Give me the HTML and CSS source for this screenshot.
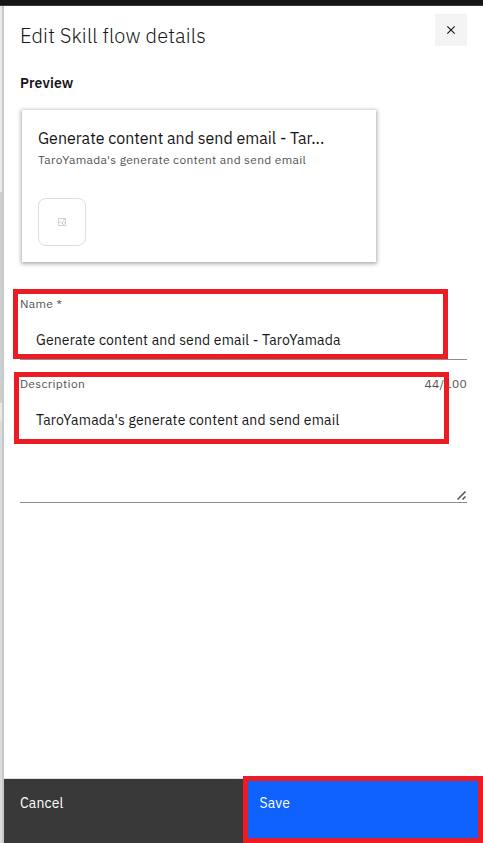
FILE: index.html
```html
<!DOCTYPE html>
<html lang="en">
<head>
<meta charset="utf-8">
<title>Edit Skill flow details</title>
<link rel="stylesheet" href="styles.css">
</head>
<body>
<div class="topbar"></div>
<div class="shell">
  <div class="backdrop"><i class="b1"></i><i class="b2"></i><i class="b3"></i><i class="b4"></i></div>
  <main class="panel">
    <header class="head">
      <h1><span>Edit Skill flow details</span></h1>
      <button class="close" aria-label="Close"><svg width="16" height="16" viewBox="0 0 16 16"><path d="M4.3 4.3l7.4 7.4M11.7 4.3l-7.4 7.4" stroke="#161616" stroke-width="1.1" fill="none"/></svg></button>
    </header>
    <h2><span>Preview</span></h2>
    <section class="card">
      <h3><span>Generate content and send email - Tar...</span></h3>
      <p><span>TaroYamada's generate content and send email</span></p>
      <div class="tile"><svg width="8" height="8" viewBox="0 0 8 8" fill="none" stroke="#c4c4c4" stroke-width=".8"><path d="M.5.5h7v7h-7zM.5 5.2l2-1.7 3.5 3.8M3.8 5l1.6-1.4 2 1.8M5 2.4l2.5-1.6"/></svg></div>
    </section>
    <div class="label"><span class="l-name">Name *</span></div>
    <div class="input"><span class="v-name">Generate content and send email - TaroYamada</span></div>
    <div class="label second"><span class="l-desc">Description</span><span class="count">44/100</span></div>
    <div class="area"><span class="v-desc">TaroYamada's generate content and send email</span>
      <svg class="grip" width="9" height="9" viewBox="0 0 9 9" stroke="#525252" stroke-width="1.5"><path d="M.5 8.5l8-8M5.5 8.5l3-3"/></svg>
    </div>
    <footer>
      <button class="cancel"><span>Cancel</span></button>
      <button class="save"><span>Save</span></button>
    </footer>
  </main>
</div>
<div class="mark mark-name"></div>
<div class="mark mark-desc"></div>
<div class="mark mark-save"></div>
</body>
</html>
```
FILE: styles.css
```css
* { box-sizing: border-box; }
body { margin: 0; height: 843px; overflow: hidden; background: #fff; color: #161616; font-family: "IBM Plex Sans", Roboto, "Noto Sans", sans-serif; display: flex; flex-direction: column; position: relative; }
h1, h2, h3, p { margin: 0; white-space: nowrap; }
button { border: 0; padding: 0; font: inherit; text-align: left; }
.topbar { height: 6px; background: #161616; border-bottom: 1px solid #393939; flex: none; }
.shell { flex: 1; display: flex; min-height: 0; }
.backdrop { width: 4px; border-right: 2px solid #c9c9c9; display: flex; flex-direction: column; }
.b1 { height: 186px; background: #e8e8e8; }
.b2 { height: 211px; background: #cfcfcf; }
.b3 { height: 18px; background: #e8e8e8; }
.b4 { flex: 1; background: #dcdcdc; }
.panel { flex: 1; display: flex; flex-direction: column; min-width: 0; }
.head { display: flex; justify-content: space-between; padding: 8px 16px 0; height: 68px; flex: none; }
h1 { font-size: 20px; line-height: 28px; font-weight: 300; padding-top: 8px; letter-spacing: .17px; }
.close { width: 32px; height: 32px; background: #f4f4f4; display: flex; align-items: center; justify-content: center; }
h2 { font-size: 14px; line-height: 18px; font-weight: 600; padding-left: 16px; height: 36px; letter-spacing: .16px; }
.card { margin-left: 18px; width: 354px; height: 152px; flex: none; padding: 17px 16px; box-shadow: 0 1px 4px 1px rgba(0,0,0,.32); }
h3 { font-size: 16px; line-height: 22px; font-weight: 400; letter-spacing: 0; }
.card p { font-size: 12px; line-height: 16px; padding-top: 3px; color: #525252; letter-spacing: .32px; }
.tile { margin-top: 30px; width: 48px; height: 48px; border: 1px solid #dedede; border-radius: 8px; display: flex; align-items: center; justify-content: center; }
.label { margin: 34px 16px 0; height: 16px; font-size: 12px; line-height: 16px; color: #525252; display: flex; justify-content: space-between; letter-spacing: .32px; flex: none; }
.input { margin: 8px 16px 0; height: 40px; padding: 10px 16px; border-bottom: 1px solid #8d8d8d; }
.input, .area { font-size: 14px; line-height: 20px; flex: none; letter-spacing: .16px; white-space: nowrap; }
.label.second { margin-top: 16px; }
.area { margin: 8px 16px 0; height: 103px; padding: 10px 16px; border-bottom: 1px solid #8d8d8d; position: relative; }
.grip { position: absolute; right: 1px; bottom: 2px; }
footer { margin-top: auto; height: 65px; border-top: 1px solid #e0e0e0; display: flex; flex: none; }
footer button { flex: 1; color: #fff; font-size: 14px; line-height: 18px; padding: 15px 16px; display: flex; align-items: flex-start; letter-spacing: .16px; }
.cancel { background: #393939; }
.save { background: #0f62fe; }
.mark { position: absolute; border: 5px solid #ec1c24; }
.mark-name { left: 13px; top: 289px; width: 435px; height: 70px; }
.mark-desc { left: 14px; top: 372px; width: 435px; height: 72px; }
.mark-save { left: 243px; top: 776px; width: 240px; height: 67px; }
```
